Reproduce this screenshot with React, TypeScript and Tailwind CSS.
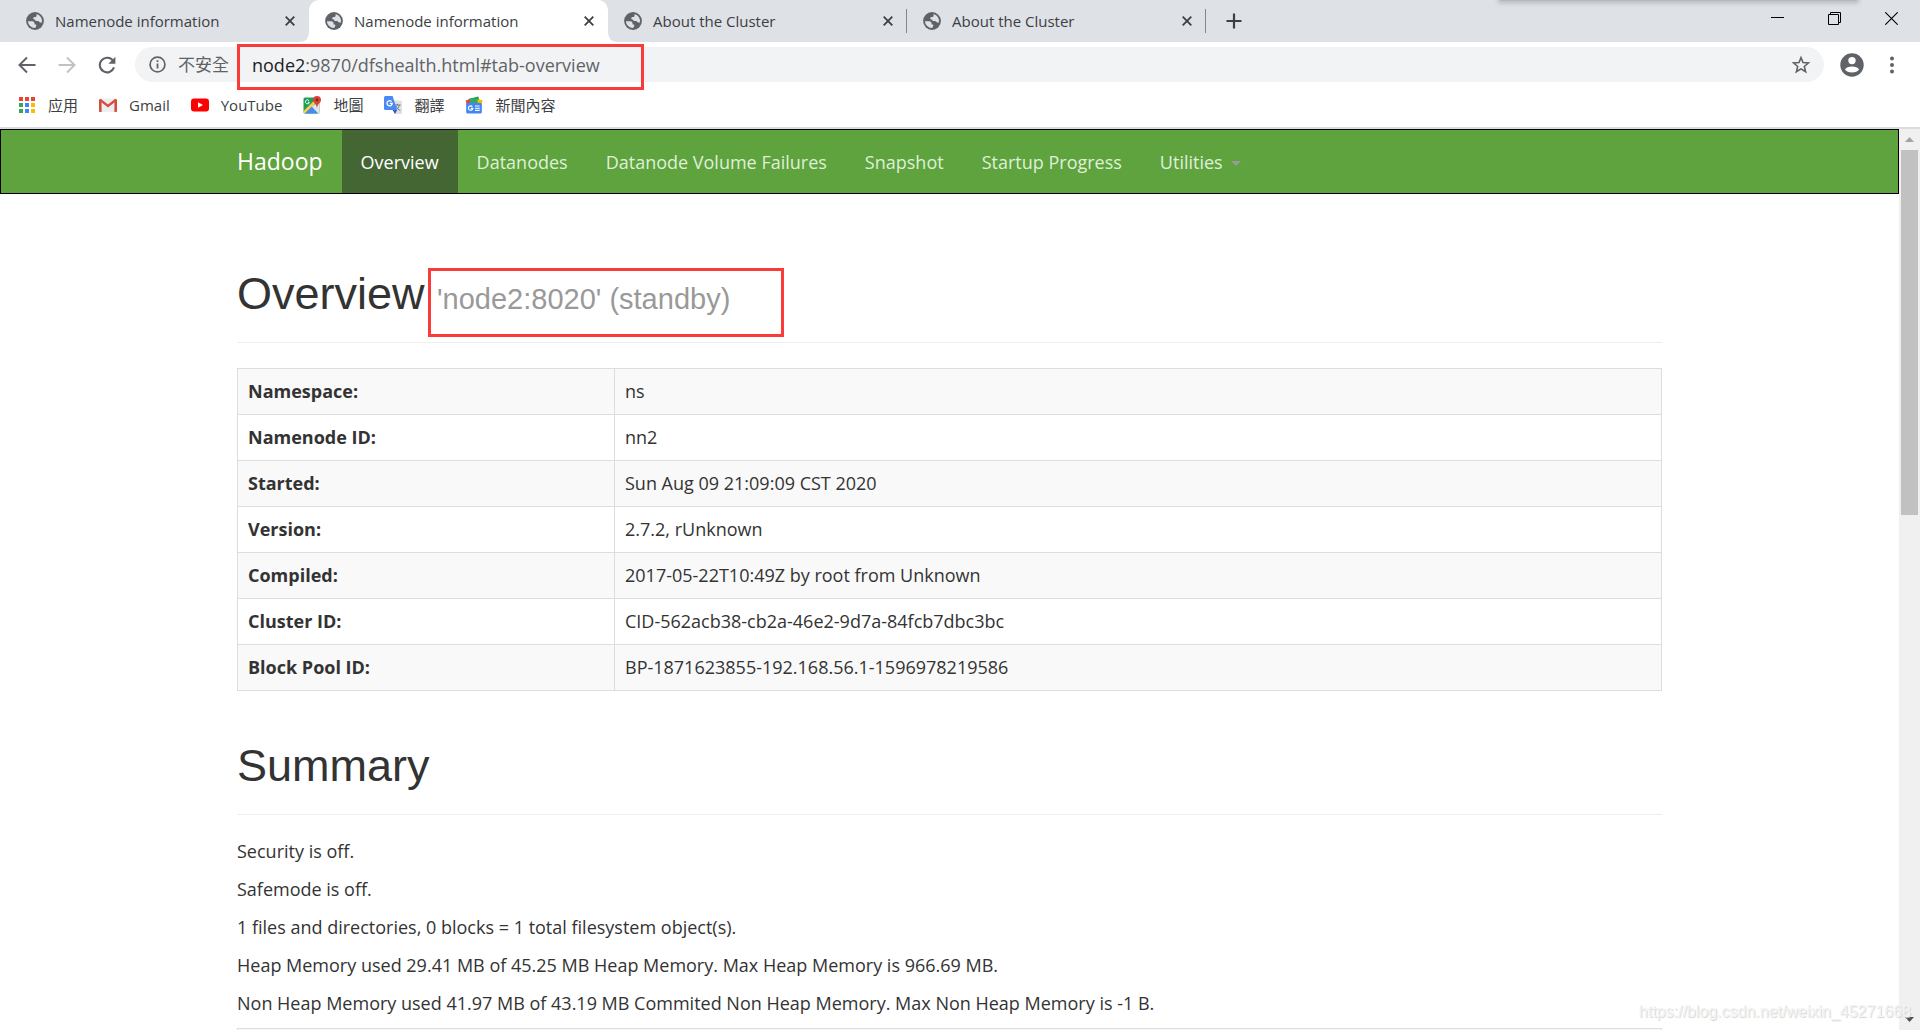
import React from "react";

const GlobeIcon = () => (
  <svg viewBox="0 0 18 18" className="size-[18px] shrink-0" aria-hidden="true">
    <circle cx="9" cy="9" r="8.9" fill="#5f6368" />
    <path
      d="M1.9 9.2 H6.2 Q8.6 9.3 8.6 11.4 V12.4 H9.8 Q10.6 12.6 10.4 13.6 L9.2 15.9 A7 7 0 0 1 1.9 9.2 Z"
      fill="#dee1e6"
    />
    <path
      d="M10.6 2.1 A7 7 0 0 1 15.8 10.6 Q14.8 10.8 13.6 10.2 Q12.9 9.1 11.6 9.1 H10 Q9.2 8.9 9.2 7.8 Q7.2 7.6 7.1 6.3 Q7.2 5 8.6 4.9 H9.6 Q10.6 4.6 10.6 3.4 Z"
      fill="#dee1e6"
    />
  </svg>
);

const TabFoot = ({ side }: { side: "left" | "right" }) => (
  <svg
    viewBox="0 0 10 10"
    aria-hidden="true"
    className={side === "left" ? "absolute bottom-0 -left-[10px] size-[10px]" : "absolute bottom-0 -right-[10px] size-[10px]"}
  >
    <path d={side === "left" ? "M10 0 V10 H0 Q10 10 10 0 Z" : "M0 0 V10 H10 Q0 10 0 0 Z"} fill="#fff" />
  </svg>
);

function Tab({ title, active = false, divider = false }: { title: string; active?: boolean; divider?: boolean }) {
  return (
    <div
      className={
        active
          ? "relative flex w-[299px] items-center rounded-t-[10px] bg-white pr-[11px] pl-4"
          : "relative flex w-[299px] items-center pr-[11px] pl-4"
      }
    >
      <GlobeIcon />
      <span className="ml-[11px] flex-1 text-[15px] leading-5 text-[#3c4043]">{title}</span>
      <button aria-label={`Close ${title}`} className="flex size-4 items-center justify-center">
        <svg viewBox="0 0 10 10" className="size-[10px]" aria-hidden="true">
          <path d="M0.7 0.7 L9.3 9.3 M9.3 0.7 L0.7 9.3" stroke="#3c4043" strokeWidth="1.8" />
        </svg>
      </button>
      {active && <TabFoot side="left" />}
      {active && <TabFoot side="right" />}
      {divider && <span className="absolute top-[9px] right-0 h-6 w-px bg-[#80868b]" />}
    </div>
  );
}

function Bookmark({ label, children }: { label: string; children: React.ReactNode }) {
  return (
    <a href="#" className="flex items-center gap-3 text-[15px] leading-5 text-[#3c4043]">
      <svg viewBox="0 0 18 18" className="size-[18px] shrink-0 overflow-visible" aria-hidden="true">
        {children}
      </svg>
      {label}
    </a>
  );
}

const appDots = [
  "#ea4335", "#ea4335", "#ea4335",
  "#34a853", "#4285f4", "#fbbc04",
  "#34a853", "#4285f4", "#fbbc04",
];

function BookmarkBar() {
  return (
    <nav
      aria-label="Bookmarks"
      className="flex h-[42px] shrink-0 items-center gap-[21px] border-b-2 border-[#dadce0] pb-1 pl-[18px]"
    >
      <Bookmark label="应用">
        {appDots.map((color, i) => (
          <rect key={i} x={1 + (i % 3) * 6} y={1 + Math.floor(i / 3) * 6} width="4" height="4" fill={color} />
        ))}
      </Bookmark>
      <Bookmark label="Gmail">
        <rect x="0" y="2.5" width="18" height="13.5" rx="1" fill="#eceff1" />
        <path d="M0 3.5 H2.6 V16 H1 Q0 16 0 15 Z M15.4 3.5 H18 V15 Q18 16 17 16 H15.4 Z" fill="#d54b3d" />
        <path d="M0.9 3.6 L9 10 L17.1 3.6" fill="none" stroke="#dd4b3e" strokeWidth="2.4" />
      </Bookmark>
      <Bookmark label="YouTube">
        <rect x="0" y="2.5" width="18" height="13" rx="3" fill="#f00" />
        <path d="M7 6.2 L12 9 L7 11.8 Z" fill="#fff" />
      </Bookmark>
      <Bookmark label="地圖">
        <rect x="0.5" y="1.5" width="16" height="16" rx="1.5" fill="#1e9d58" />
        <path d="M16.5 5 V16 Q16.5 17.5 15 17.5 L8.5 10.5 Z" fill="#e3e5e8" />
        <path d="M1.5 17.5 L8.5 10.5 L15 17.5 Z" fill="#4a89f3" />
        <path d="M0.7 16.6 L14.5 3.2" stroke="#fbd043" strokeWidth="2.6" />
        <path d="M6 4.6 A2 2 0 1 0 6.4 6.2 H4.9" fill="none" stroke="#fff" strokeWidth="0.9" />
        <path d="M14 0 A4 4 0 0 1 18 4 C18 7 14.6 7.6 14 12 C13.4 7.6 10 7 10 4 A4 4 0 0 1 14 0 Z" fill="#dc4437" />
        <circle cx="14" cy="4" r="1.4" fill="#7b231e" />
      </Bookmark>
      <Bookmark label="翻譯">
        <path d="M7 4.5 H16.5 Q18 4.5 18 6 V16.5 Q18 18 16.5 18 H11 Z" fill="#dfe1e5" />
        <path
          d="M10.6 9 H16.6 M13.4 7.8 V9 M15.4 9 C15 11.5 13 13.5 11.4 14.2 M12 10 C12.6 12 14.6 13.8 16.4 14.4"
          fill="none"
          stroke="#6b7f86"
          strokeWidth="1"
        />
        <path d="M1.5 0 H8.6 L13.2 14 H1.5 Q0 14 0 12.5 V1.5 Q0 0 1.5 0 Z" fill="#4a89f3" />
        <path d="M8.6 14 H13.2 L11 18 Z" fill="#2b5fc1" />
        <path d="M7.6 5.6 A2.6 2.6 0 1 0 8.2 7.4 H5.8" fill="none" stroke="#fff" strokeWidth="1.3" />
      </Bookmark>
      <Bookmark label="新聞內容">
        <path d="M3.2 3 L13.4 0.6 L15 7 L5 9 Z" fill="#1e9d58" />
        <path d="M0.6 4.4 L7 3 L8 9 L2 10 Z" fill="#ea4335" />
        <path d="M11 2.8 L17.6 4.2 L16.4 10 L10 9 Z" fill="#fbbc04" />
        <rect x="5" y="2.8" width="7.6" height="5" fill="#35a95c" />
        <rect x="1.2" y="6.8" width="15.6" height="10.8" rx="1.5" fill="#4285f4" />
        <path d="M7.4 10.7 A2.2 2.2 0 1 0 7.8 12.3 H5.8" fill="none" stroke="#fff" strokeWidth="1.2" />
        <path d="M10 10 H14.6 M10 12.2 H15 M10 14.4 H14.6" stroke="#fff" strokeWidth="1.1" />
      </Bookmark>
    </nav>
  );
}

function TitleBar() {
  return (
    <header className="relative flex h-[42px] shrink-0 bg-[#dee1e6] pl-[10px]">
      <div className="absolute top-0 right-[63px] h-px w-[357px] bg-[#b5b8bc] shadow-[0_0_4px_2px_#b5b8bc]" />
      <Tab title="Namenode information" />
      <Tab title="Namenode information" active />
      <Tab title="About the Cluster" divider />
      <Tab title="About the Cluster" divider />
      <button aria-label="New tab" className="ml-5 flex items-center">
        <svg viewBox="0 0 16 16" className="size-4" aria-hidden="true">
          <path d="M8 0.5 V15.5 M0.5 8 H15.5" stroke="#3c4043" strokeWidth="2.2" />
        </svg>
      </button>
      <div className="ml-auto flex h-9 items-center gap-11 pr-[22px] text-black">
        <button aria-label="Minimize">
          <svg viewBox="0 0 13 13" className="size-[13px]" aria-hidden="true">
            <path d="M0 5.5 H13" stroke="currentColor" />
          </svg>
        </button>
        <button aria-label="Restore">
          <svg viewBox="0 0 13 13" className="size-[13px]" fill="none" stroke="currentColor" aria-hidden="true">
            <path d="M0.5 2.5 H10.5 V12.5 H0.5 Z M2.5 2.5 V0.5 H12.5 V10.5 H10.5" />
          </svg>
        </button>
        <button aria-label="Close">
          <svg viewBox="0 0 13 13" className="size-[13px]" aria-hidden="true">
            <path d="M0.3 0.3 L12.7 12.7 M12.7 0.3 L0.3 12.7" stroke="currentColor" strokeWidth="1.1" />
          </svg>
        </button>
      </div>
    </header>
  );
}

function Toolbar() {
  return (
    <div className="flex h-[45px] shrink-0 items-center pr-6 pl-[18px]">
      <div className="flex items-center gap-[22px]">
        <button aria-label="Back">
          <svg viewBox="0 0 18 18" className="size-[18px]" fill="none" stroke="#5f6368" strokeWidth="2" aria-hidden="true">
            <path d="M17.5 9 H2 M9 1.5 L1.5 9 L9 16.5" />
          </svg>
        </button>
        <button aria-label="Forward">
          <svg viewBox="0 0 18 18" className="size-[18px]" fill="none" stroke="#c0c2c5" strokeWidth="2" aria-hidden="true">
            <path d="M0.5 9 H16 M9 1.5 L16.5 9 L9 16.5" />
          </svg>
        </button>
        <button aria-label="Reload">
          <svg viewBox="0 0 18 18" className="size-[18px]" aria-hidden="true">
            <path d="M15.2 5 A7.3 7.3 0 1 0 16 11.4" fill="none" stroke="#5f6368" strokeWidth="2.1" />
            <path d="M17.4 0.8 V7.8 H10.4 Z" fill="#5f6368" />
          </svg>
        </button>
      </div>
      <div className="relative ml-[19px] flex h-[35px] flex-1 items-center rounded-full bg-[#f1f3f4] pr-[13px] pl-[14px]">
        <svg viewBox="0 0 17 17" className="size-[17px]" aria-hidden="true">
          <circle cx="8.5" cy="8.5" r="7.4" fill="none" stroke="#5f6368" strokeWidth="1.7" />
          <path d="M8.5 7.4 V12.6 M8.5 4.3 V6" stroke="#5f6368" strokeWidth="1.8" />
        </svg>
        <span className="ml-3 text-[17px] leading-6 text-[#5f6368]">不安全</span>
        <a href="#tab-overview" className="ml-[23px] text-lg leading-6 text-[#5f6368]">
          <span className="text-[#202124]">node2</span>:9870/dfshealth.html#tab-overview
        </a>
        <button aria-label="Bookmark this page" className="ml-auto">
          <svg viewBox="0 0 20 20" className="size-5" aria-hidden="true">
            <path
              d="M10 2.6 L12 7.6 L17.4 8 L13.3 11.5 L14.6 16.8 L10 13.9 L5.4 16.8 L6.7 11.5 L2.6 8 L8 7.6 Z"
              fill="none"
              stroke="#5f6368"
              strokeWidth="1.6"
            />
          </svg>
        </button>
        <div className="absolute -top-[3px] left-[102px] h-[46px] w-[407px] border-3 border-[#fb3a3a]" />
      </div>
      <button aria-label="Profile" className="ml-4">
        <svg viewBox="0 0 24 24" className="size-6" aria-hidden="true">
          <circle cx="12" cy="12" r="11.7" fill="#5f6368" />
          <circle cx="12" cy="7.6" r="3.7" fill="#fff" />
          <path d="M5 16.6 C6.4 12.6 17.6 12.6 19 16.6 C17 20.4 7 20.4 5 16.6 Z" fill="#fff" />
        </svg>
      </button>
      <button aria-label="Menu" className="ml-6">
        <svg viewBox="0 0 8 18" className="h-[18px] w-2" fill="#5f6368" aria-hidden="true">
          <circle cx="4" cy="2.6" r="2" />
          <circle cx="4" cy="9" r="2" />
          <circle cx="4" cy="15.4" r="2" />
        </svg>
      </button>
    </div>
  );
}

const navItems = ["Datanodes", "Datanode Volume Failures", "Snapshot", "Startup Progress"];

const info = [
  ["Namespace:", "ns"],
  ["Namenode ID:", "nn2"],
  ["Started:", "Sun Aug 09 21:09:09 CST 2020"],
  ["Version:", "2.7.2, rUnknown"],
  ["Compiled:", "2017-05-22T10:49Z by root from Unknown"],
  ["Cluster ID:", "CID-562acb38-cb2a-46e2-9d7a-84fcb7dbc3bc"],
  ["Block Pool ID:", "BP-1871623855-192.168.56.1-1596978219586"],
];

const summary = [
  "Security is off.",
  "Safemode is off.",
  "1 files and directories, 0 blocks = 1 total filesystem object(s).",
  "Heap Memory used 29.41 MB of 45.25 MB Heap Memory. Max Heap Memory is 966.69 MB.",
  "Non Heap Memory used 41.97 MB of 43.19 MB Commited Non Heap Memory. Max Non Heap Memory is -1 B.",
];

function SiteNav() {
  return (
    <nav className="border border-black bg-[#5fa33e]">
      <div className="mx-auto flex h-[63px] max-w-[1425px] items-stretch text-lg text-[#dff0d8]">
        <a href="#" className="flex items-center pr-[19px] text-[23px] text-white">
          Hadoop
        </a>
        <a href="#tab-overview" className="flex items-center bg-[#446633] px-[19px] text-white">
          Overview
        </a>
        {navItems.map((item) => (
          <a key={item} href="#" className="flex items-center px-[19px]">
            {item}
          </a>
        ))}
        <button className="flex items-center gap-2 px-[19px]">
          Utilities
          <svg viewBox="0 0 10 5" className="mt-1 h-[5px] w-[10px]" aria-hidden="true">
            <path d="M0 0 H10 L5 5 Z" fill="#999" />
          </svg>
        </button>
      </div>
    </nav>
  );
}

export default function App() {
  return (
    <div className="relative flex h-screen flex-col overflow-hidden bg-white font-['Open_Sans','Noto_Sans_CJK_TC',sans-serif]">
      <TitleBar />
      <Toolbar />
      <BookmarkBar />
      <div className="flex min-h-0 flex-1">
        <div className="min-w-0 flex-1 overflow-hidden">
          <SiteNav />
          <main className="mx-auto max-w-[1425px] text-lg text-[#333]">
            <h1 className="mt-[75px] border-b border-[#eee] pb-[23px] font-['Liberation_Sans',sans-serif] text-[45px] leading-[50px]">
              Overview{" "}
              <small className="relative text-[29px] leading-none text-[#999]">
                'node2:8020' (standby)
                <span className="absolute -top-[15px] -right-[54px] -left-[9px] h-[69px] border-3 border-[#fb3a3a]" />
              </small>
            </h1>
            <table className="mt-[25px] w-full border-collapse text-left leading-[25px]">
              <tbody>
                {info.map(([name, value]) => (
                  <tr key={name} className="odd:bg-[#f9f9f9]">
                    <th className="w-[377px] border border-[#ddd] p-[10px] font-bold">{name}</th>
                    <td className="border border-[#ddd] p-[10px]">{value}</td>
                  </tr>
                ))}
              </tbody>
            </table>
            <h2 className="mt-[50px] border-b border-[#eee] pb-[23px] font-['Liberation_Sans',sans-serif] text-[45px] leading-[50px]">
              Summary
            </h2>
            <div className="mt-[23px] flex flex-col gap-3 leading-[26px]">
              {summary.map((line) => (
                <p key={line}>{line}</p>
              ))}
            </div>
            <div className="mt-3 h-12 border border-[#ddd] bg-[#f9f9f9]" />
          </main>
        </div>
        <div className="flex w-[21px] flex-col items-center bg-[#f0f0f0]" aria-hidden="true">
          <svg viewBox="0 0 9 5" className="my-2 h-[5px] w-[9px] shrink-0">
            <path d="M0 5 L4.5 0 L9 5 Z" fill="#a3a3a3" />
          </svg>
          <div className="h-[365px] w-[17px] bg-[#c1c1c1]" />
          <svg viewBox="0 0 9 5" className="mt-auto mb-2 h-[5px] w-[9px] shrink-0">
            <path d="M0 0 L4.5 5 L9 0 Z" fill="#505050" />
          </svg>
        </div>
      </div>
      <div className="absolute right-[9px] bottom-2 font-['Liberation_Sans',sans-serif] text-base leading-5 text-[#f4f4f4] [text-shadow:1px_1px_1px_#d4d4d4]">
        https://blog.csdn.net/weixin_45271668
      </div>
    </div>
  );
}
